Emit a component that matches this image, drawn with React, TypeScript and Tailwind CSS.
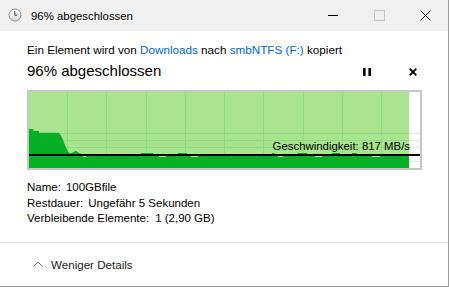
import React from "react";

const VCOLS = [38, 77, 117, 156, 195, 234, 274, 313, 352];
const HROWS = [41, 48, 55, 69];
const BUMPS: [number, number][] = [
  [112, 124],
  [149, 158],
  [243, 246],
  [268, 278],
  [303, 311],
  [323, 328],
];
const NOTCHES: [number, number][] = [
  [54, 57],
  [130, 137],
  [162, 169],
  [249, 254],
  [286, 293],
  [343, 351],
];

function Chart() {
  return (
    <svg width={391} height={76} viewBox="0 0 391 76" className="block" shapeRendering="crispEdges">
      <rect x={0} y={0} width={391} height={76} fill="#ffffff" />
      {HROWS.map((r) => (
        <rect key={"w" + r} x={380} y={r} width={11} height={1} fill="#d4f1ca" />
      ))}
      <rect x={0} y={0} width={380} height={76} fill="#a9e591" />
      {VCOLS.map((c) => (
        <rect key={"v" + c} x={c} y={0} width={1} height={76} fill="#8edb77" />
      ))}
      {HROWS.map((r) => (
        <rect key={"h" + r} x={0} y={r} width={380} height={1} fill="#8edb77" />
      ))}
      <polygon
        shapeRendering="auto"
        fill="#06b025"
        points="0,76 0,36.7 4.3,37.2 4.3,38.7 10,39 10,40.7 30,40.7 32.7,44.7 36,53 38.7,59.2 41,61.6 44.3,60.2 47,58.7 50.3,61.2 53,62 380,62 380,76"
      />
      {BUMPS.map(([a, b]) => (
        <rect key={"b" + a} x={a} y={61} width={b - a} height={1} fill="#06b025" />
      ))}
      {NOTCHES.map(([a, b]) => (
        <rect key={"n" + a} x={a} y={64} width={b - a} height={1} fill="#b6eaa4" />
      ))}
      <rect x={0} y={62} width={391} height={2} fill="#000000" />
    </svg>
  );
}

function ClockIcon() {
  return (
    <svg width={14} height={14} viewBox="0 0 14 14" className="block">
      <defs>
        <linearGradient id="clk" x1="0" y1="0" x2="0" y2="1">
          <stop offset="0" stopColor="#ffffff" />
          <stop offset="1" stopColor="#d9d9d9" />
        </linearGradient>
      </defs>
      <circle cx={7} cy={7} r={6} fill="url(#clk)" stroke="#8c8c8c" strokeWidth={1} />
      <path d="M6.8 3.2V7.3H9.2" fill="none" stroke="#3a3a3a" strokeWidth={1} />
    </svg>
  );
}

export default function App() {
  return (
    <div className="w-[449px] h-[287px] bg-white border-r border-b border-[#9b9b9b] flex flex-col overflow-hidden text-black font-['Liberation_Sans',Arial,sans-serif]">
      {/* title bar */}
      <div className="h-[31px] shrink-0 bg-[#f0f0f0] flex items-center">
        <div className="ml-[8px] self-start mt-[8px]">
          <ClockIcon />
        </div>
        <span className="ml-[9px] text-[11.4px] leading-[16px] whitespace-nowrap">96% abgeschlossen</span>
        <div className="ml-auto flex h-full">
          <div className="w-[46px] h-full flex items-center justify-center">
            <div className="w-[10px] h-px bg-black" />
          </div>
          <div className="w-[46px] h-full flex items-center justify-center">
            <div className="w-[11px] h-[11px] border border-[#c6c6c6]" />
          </div>
          <div className="w-[46px] h-full flex items-center justify-center">
            <svg width={11} height={11} viewBox="0 0 11 11" className="block">
              <path d="M0.5 0.5L10.5 10.5M10.5 0.5L0.5 10.5" stroke="#000" strokeWidth={1} fill="none" />
            </svg>
          </div>
        </div>
      </div>

      {/* body */}
      <div className="h-[211px] shrink-0 pl-[27px] pr-[26px] pt-[11px] flex flex-col">
        <div className="text-[11.7px] leading-[16px] whitespace-nowrap">
          Ein Element wird von <span className="text-[#0066cc]">Downloads</span> nach{" "}
          <span className="text-[#0066cc]">smbNTFS (F:)</span> kopiert
        </div>
        <div className="mt-[3px] h-[20px] flex items-center justify-between">
          <span className="text-[15px] leading-[20px] whitespace-nowrap">96% abgeschlossen</span>
          <div className="flex items-center gap-[28px] pt-[2px]">
            <div className="w-[18px] h-[18px] flex items-center justify-center">
              <svg width={8} height={8} viewBox="0 0 8 8" className="block">
                <rect x={0} y={0} width={2.6} height={8} fill="#000" />
                <rect x={5.4} y={0} width={2.6} height={8} fill="#000" />
              </svg>
            </div>
            <div className="w-[18px] h-[18px] flex items-center justify-center">
              <svg width={8} height={8} viewBox="0 0 8 8" className="block">
                <path d="M0.7 0.7L7.3 7.3M7.3 0.7L0.7 7.3" stroke="#000" strokeWidth={1.9} fill="none" />
              </svg>
            </div>
          </div>
        </div>
        <div className="mt-[9px] h-[80px] border-2 border-[#c5c5c5] relative">
          <Chart />
          <span className="absolute right-[10px] top-[47px] text-[11.4px] leading-[14px] whitespace-nowrap">
            Geschwindigkeit: 817 MB/s
          </span>
        </div>
        <div className="mt-[10px] text-[11.5px] leading-[15.5px] whitespace-nowrap">
          <div>
            Name:<span className="ml-[5px]">100GBfile</span>
          </div>
          <div>
            Restdauer:<span className="ml-[5px]">Ungefähr 5 Sekunden</span>
          </div>
          <div>
            Verbleibende Elemente:<span className="ml-[6px]">1 (2,90 GB)</span>
          </div>
        </div>
      </div>

      <div className="h-px shrink-0 bg-[#e2e2e2]" />

      {/* footer */}
      <div className="flex-1 flex items-center">
        <svg width={10} height={6} viewBox="0 0 10 6" className="block ml-[33px] mb-[1px]">
          <path d="M0.5 5.5L5 1L9.5 5.5" stroke="#707070" strokeWidth={1} fill="none" />
        </svg>
        <span className="ml-[8px] text-[11.6px] leading-[16px] text-[#1a1a1a] whitespace-nowrap">Weniger Details</span>
      </div>
    </div>
  );
}
